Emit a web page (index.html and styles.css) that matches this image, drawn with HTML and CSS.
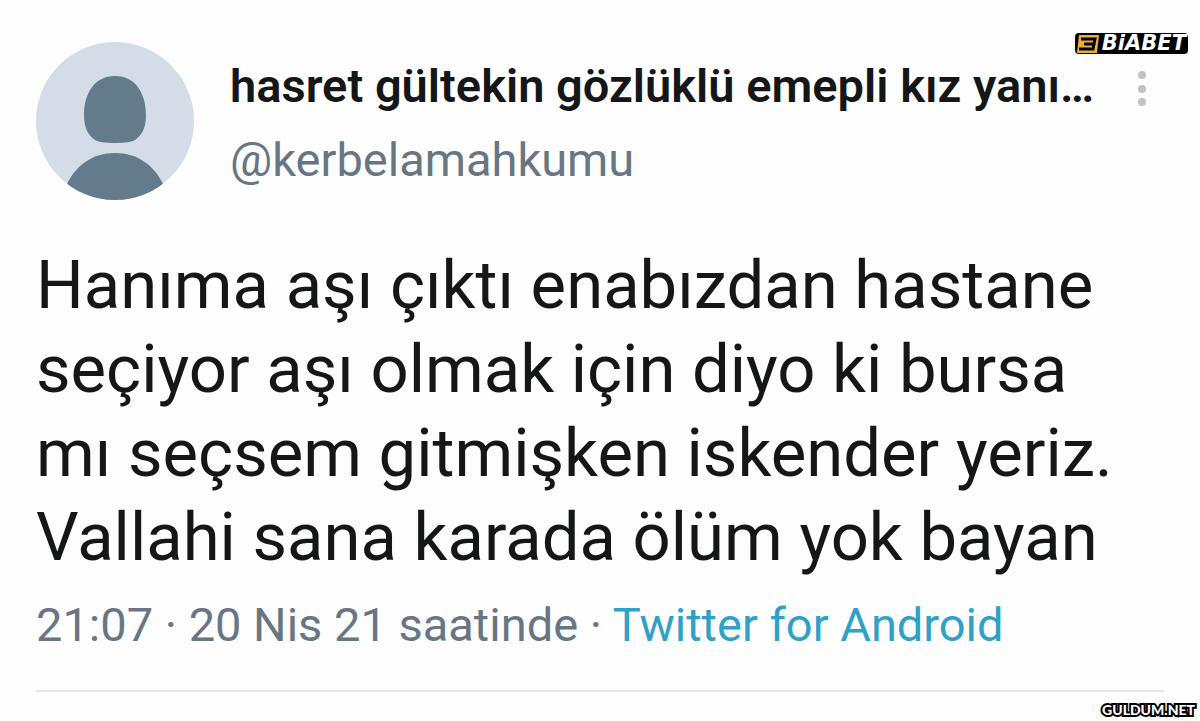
FILE: index.html
```html
<!DOCTYPE html>
<html lang="tr">
<head>
    <meta charset="UTF-8">
    <meta name="viewport" content="width=device-width, initial-scale=1">
    <title>Tweet</title>
    <link rel="stylesheet" href="styles.css">
</head>
<body>
<article class="tweet">
    <header class="tweet-header">
        <svg class="avatar" viewBox="0 0 158 158" aria-hidden="true">
            <defs>
                <clipPath id="circle"><circle cx="79" cy="79" r="79"/></clipPath>
            </defs>
            <g clip-path="url(#circle)">
                <rect width="158" height="158" fill="#d4dce7"/>
                <path fill="#647b8b" d="M79 34C100 34 110 52 110 73C110 86 106 93 99 98Q95 101 79 101T59 98C52 93 48 86 48 73C48 52 58 34 79 34z"/>
                <path fill="#647b8b" d="M31 142c9-19 26-31 48-31s39 12 48 31v16H31z"/>
            </g>
        </svg>
        <div class="user">
            <h1 class="name">hasret gültekin gözlüklü emepli kız yanı…</h1>
            <a class="handle" href="#profile">@kerbelamahkumu</a>
        </div>
        <button class="more" type="button" aria-label="Diğer">
            <svg viewBox="0 0 12 36" aria-hidden="true">
                <circle cx="6" cy="5" r="4"/><circle cx="6" cy="19" r="4"/><circle cx="6" cy="32" r="4"/>
            </svg>
        </button>
    </header>
    <p class="tweet-text">Hanıma aşı çıktı enabızdan hastane seçiyor aşı olmak için diyo ki bursa mı seçsem gitmişken iskender yeriz. Vallahi sana karada ölüm yok bayan</p>
    <footer class="tweet-meta">21:07 · 20 Nis 21 saatinde · <a href="#source">Twitter for Android</a></footer>
</article>
<div class="sponsor">
    <svg class="sponsor-mark" viewBox="0 0 22 18" aria-hidden="true">
        <path fill="#efae3a" d="M2 0h20l-2 18H0z"/>
        <path fill="none" stroke="#000" stroke-width="3" d="M4 4h14l-1 5H7M17 9l-1 5H2"/>
    </svg>
    <span class="sponsor-name">BiABET</span>
</div>
<div class="watermark">GULDUM.NET</div>
</body>
</html>
```

FILE: styles.css
```css
body {
    margin: 0;
    background: #fdfdfd;
    color: #151617;
    font-family: Roboto, "Noto Sans", sans-serif;
}

.tweet {
    padding: 42px 36px 0;
}

.tweet-header {
    display: flex;
    align-items: flex-start;
}

.avatar {
    flex: none;
    width: 158px;
    height: 158px;
}

.user {
    flex: 1;
    min-width: 0;
    margin: 16px 0 0 36px;
}

.name {
    margin: 0;
    font-size: 47px;
    line-height: 56px;
    font-weight: 600;
    white-space: nowrap;
}

.handle {
    display: block;
    margin-top: 18px;
    color: #687683;
    font-size: 47px;
    line-height: 56px;
    text-decoration: none;
}

.more {
    margin: 28px 16px 0 0;
    padding: 0;
    border: 0;
    background: none;
}

.more svg {
    display: block;
    width: 12px;
    height: 36px;
    fill: #bfc3c6;
}

.tweet-text {
    margin: 43px 0 0;
    padding-right: 24px;
    font-size: 67px;
    line-height: 84px;
}

.tweet-meta {
    padding: 16px 0 35px;
    border-bottom: 2px solid #e4e6e7;
    color: #687683;
    font-size: 47px;
    line-height: 60px;
}

.tweet-meta a {
    color: #2fa1c8;
    text-decoration: none;
}

.sponsor {
    position: absolute;
    top: 33px;
    right: 12px;
    display: flex;
    align-items: center;
    gap: 3px;
    height: 21px;
    padding: 0 2px;
    border-radius: 4px;
    background: #000;
    color: #fff;
}

.sponsor-mark {
    width: 22px;
    height: 18px;
}

.sponsor-name {
    font: italic 700 21px/23px "DejaVu Sans", sans-serif;
}

.watermark {
    position: absolute;
    right: 5px;
    bottom: 1px;
    color: #fff;
    font: 900 14px/20px Lato, sans-serif;
    -webkit-text-stroke: 4px #000;
    paint-order: stroke fill;
}
```
